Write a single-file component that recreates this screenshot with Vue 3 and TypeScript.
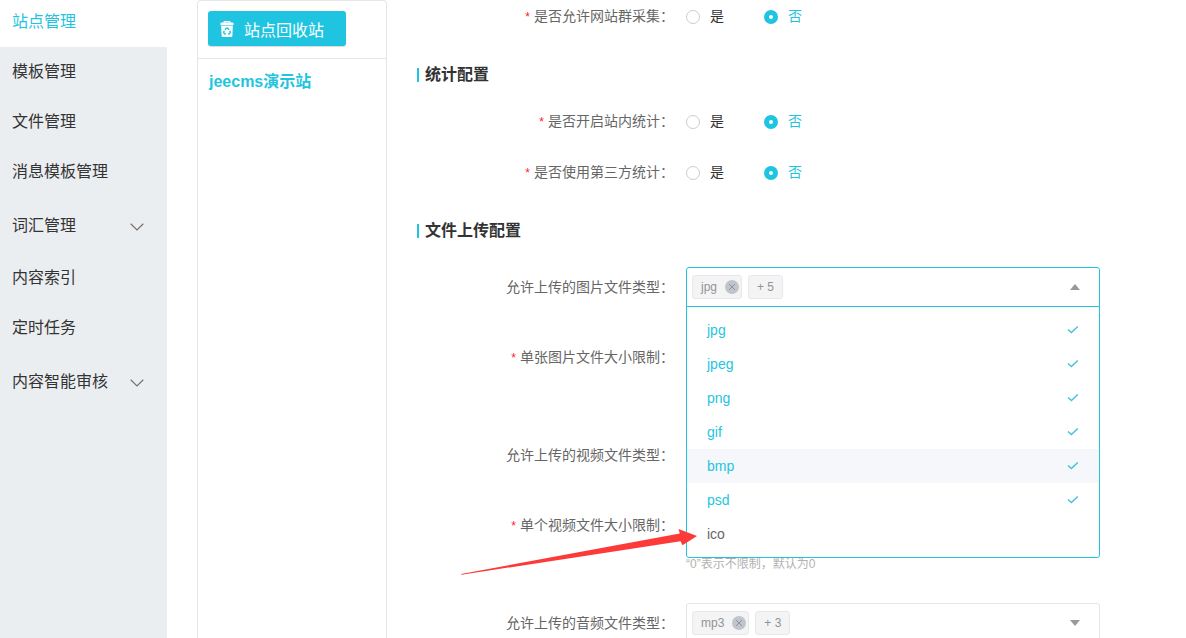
<script setup lang="ts">
import { ref } from 'vue'

interface MenuItem {
  label: string
  active?: boolean
  expandable?: boolean
}

interface RadioRow {
  id: string
  label: string
}

const menu: MenuItem[] = [
  { label: '站点管理', active: true },
  { label: '模板管理' },
  { label: '文件管理' },
  { label: '消息模板管理' },
  { label: '词汇管理', expandable: true },
  { label: '内容索引' },
  { label: '定时任务' },
  { label: '内容智能审核', expandable: true },
]

const collectRows: RadioRow[] = [{ id: 'collect', label: '是否允许网站群采集：' }]
const statRows: RadioRow[] = [
  { id: 'inner-stat', label: '是否开启站内统计：' },
  { id: 'third-stat', label: '是否使用第三方统计：' },
]

const answers = ref<Record<string, string>>({
  collect: 'no',
  'inner-stat': 'no',
  'third-stat': 'no',
})

const imageTypes = ['jpg', 'jpeg', 'png', 'gif', 'bmp', 'psd', 'ico']
const selected = ref<string[]>(['jpg', 'jpeg', 'png', 'gif', 'bmp', 'psd'])
const hovered = ref('bmp')
const open = ref(true)
const imageLimit = ref('')
const videoLimit = ref('')

function toggle(type: string) {
  selected.value = selected.value.includes(type)
    ? selected.value.filter((t) => t !== type)
    : [...selected.value, type]
}
</script>

<template>
  <div class="page">
    <nav class="sidebar">
      <template v-for="item in menu" :key="item.label">
        <button v-if="item.expandable" type="button" class="menu-item expandable">
          <span>{{ item.label }}</span>
          <svg class="chevron" viewBox="0 0 14 8" width="14" height="8" aria-hidden="true">
            <path d="M0.7 0.8L7 7L13.3 0.8" />
          </svg>
        </button>
        <a v-else href="#" class="menu-item" :class="{ active: item.active }">{{ item.label }}</a>
      </template>
    </nav>

    <aside class="sites">
      <div class="sites-head">
        <button type="button" class="recycle">
          <svg viewBox="0 0 14 16" width="14" height="16" aria-hidden="true">
            <path d="M4 2V1.4Q4 0.6 4.8 0.6H9.2Q10 0.6 10 1.4V2" fill="none" stroke="#fff" stroke-width="1.2" />
            <path d="M1.5 1.6H12.5Q13.5 1.6 13.5 2.6V4.2H0.5V2.6Q0.5 1.6 1.5 1.6Z" fill="#fff" />
            <path d="M1.2 4.8H12.8L12.4 14.8Q12.3 16 11.2 16H2.8Q1.7 16 1.6 14.8Z" fill="#fff" />
            <path
              d="M5 8.8L6.2 7.2H7.8L9 8.8M9.8 9.8L10.4 11.4L9.5 12.9H7.9M6.1 12.9H4.5L3.6 11.4L4.3 9.8"
              fill="none"
              stroke="#1fc5e0"
              stroke-width="1.4"
            />
          </svg>
          <span>站点回收站</span>
        </button>
      </div>
      <a href="#" class="site-name">jeecms演示站</a>
    </aside>

    <main class="content">
      <div v-for="row in collectRows" :key="row.id" class="row" role="radiogroup" :aria-labelledby="row.id">
        <span :id="row.id" class="label"><i class="star">*</i>{{ row.label }}</span>
        <div class="control radios">
          <label class="radio"><input v-model="answers[row.id]" type="radio" :name="row.id" value="yes" /><span>是</span></label>
          <label class="radio"><input v-model="answers[row.id]" type="radio" :name="row.id" value="no" /><span>否</span></label>
        </div>
      </div>

      <h2 class="heading">统计配置</h2>
      <div v-for="row in statRows" :key="row.id" class="row" role="radiogroup" :aria-labelledby="row.id">
        <span :id="row.id" class="label"><i class="star">*</i>{{ row.label }}</span>
        <div class="control radios">
          <label class="radio"><input v-model="answers[row.id]" type="radio" :name="row.id" value="yes" /><span>是</span></label>
          <label class="radio"><input v-model="answers[row.id]" type="radio" :name="row.id" value="no" /><span>否</span></label>
        </div>
      </div>

      <h2 class="heading">文件上传配置</h2>
      <div class="row">
        <label class="label tall" for="image-types">允许上传的图片文件类型：</label>
        <div class="control">
          <div class="select" :class="{ open }">
            <span v-if="selected.length" class="tag">
              {{ selected[0] }}
              <button type="button" class="close" aria-label="删除" @click="toggle(selected[0])">
                <svg viewBox="0 0 14 14" width="14" height="14"><path d="M4 4L10 10M10 4L4 10" /></svg>
              </button>
            </span>
            <span v-if="selected.length > 1" class="tag">+ {{ selected.length - 1 }}</span>
            <input id="image-types" class="select-input" type="text" readonly @click="open = !open" />
            <svg class="caret" viewBox="0 0 10 6" width="10" height="6" aria-hidden="true">
              <path :d="open ? 'M0 6L5 0L10 6Z' : 'M0 0L5 6L10 0Z'" />
            </svg>
          </div>
          <ul v-if="open" class="dropdown" role="listbox" aria-multiselectable="true">
            <li
              v-for="type in imageTypes"
              :key="type"
              class="option"
              :class="{ selected: selected.includes(type), hover: hovered === type }"
              role="option"
              :aria-selected="selected.includes(type)"
              @mouseenter="hovered = type"
              @click="toggle(type)"
            >
              <span>{{ type }}</span>
              <svg v-if="selected.includes(type)" viewBox="0 0 12 12" width="12" height="12" aria-hidden="true">
                <path d="M1 5.6L4.4 8.6L10.8 2.4" />
              </svg>
            </li>
          </ul>
          <svg class="pointer" viewBox="0 0 240 48" width="240" height="48" aria-hidden="true">
            <path d="M0 46L218.8 5.6L217.5 1L236 8L221.5 17.2L219.5 13.2L0.5 46.8Z" />
          </svg>
        </div>
      </div>

      <div class="row spaced">
        <label class="label tall" for="image-limit"><i class="star">*</i>单张图片文件大小限制：</label>
        <div class="control">
          <input id="image-limit" v-model="imageLimit" class="text-input" type="text" />
        </div>
      </div>

      <div class="row">
        <label class="label tall" for="video-types">允许上传的视频文件类型：</label>
        <div class="control">
          <div class="select">
            <input id="video-types" class="select-input" type="text" readonly />
            <svg class="caret" viewBox="0 0 10 6" width="10" height="6" aria-hidden="true"><path d="M0 0L5 6L10 0Z" /></svg>
          </div>
        </div>
      </div>

      <div class="row limit">
        <label class="label tall" for="video-limit"><i class="star">*</i>单个视频文件大小限制：</label>
        <div class="control">
          <input id="video-limit" v-model="videoLimit" class="text-input" type="text" />
          <p class="hint">“0”表示不限制，默认为0</p>
        </div>
      </div>

      <div class="row">
        <label class="label tall" for="audio-types">允许上传的音频文件类型：</label>
        <div class="control">
          <div class="select">
            <span class="tag">
              mp3
              <button type="button" class="close" aria-label="删除">
                <svg viewBox="0 0 14 14" width="14" height="14"><path d="M4 4L10 10M10 4L4 10" /></svg>
              </button>
            </span>
            <span class="tag">+ 3</span>
            <input id="audio-types" class="select-input" type="text" readonly />
            <svg class="caret" viewBox="0 0 10 6" width="10" height="6" aria-hidden="true"><path d="M0 0L5 6L10 0Z" /></svg>
          </div>
        </div>
      </div>
    </main>
  </div>
</template>

<style>
body {
  margin: 0;
  background: #fff;
}
</style>

<style scoped>
.page {
  display: flex;
  height: 100vh;
  overflow: hidden;
  color: #333;
  font-family: "Liberation Sans", "Noto Sans CJK SC", sans-serif;
  font-size: 14px;
}

.page *,
.page *::before {
  box-sizing: border-box;
}

button,
input {
  margin: 0;
  padding: 0;
  border: 0;
  font: inherit;
}

button {
  cursor: pointer;
}

.sidebar {
  flex: 0 0 167px;
  background: #ebeef1;
}

.menu-item {
  display: flex;
  align-items: center;
  justify-content: space-between;
  width: 100%;
  height: 50px;
  padding: 0 23px 0 12px;
  background: transparent;
  color: #333;
  font-size: 16px;
  line-height: 24px;
  text-decoration: none;
}

.menu-item.active {
  height: 47px;
  padding-bottom: 4px;
  background: #fff;
  color: #1fc5e0;
}

.menu-item.expandable {
  height: 56px;
  padding-top: 2px;
}

.chevron {
  margin-top: 2px;
  fill: none;
  stroke: #77706a;
  stroke-width: 1.2;
}

.sites {
  flex: 0 0 190px;
  margin-left: 30px;
  border: 1px solid #e6e6e6;
  border-bottom: 0;
  border-radius: 4px 4px 0 0;
}

.sites-head {
  padding: 10px 10px 12px;
  border-bottom: 1px solid #e6e6e6;
}

.recycle {
  display: flex;
  align-items: center;
  gap: 10px;
  width: 138px;
  height: 35px;
  padding: 1px 0 0 12px;
  border-radius: 3px;
  background: #1fc5e0;
  box-shadow: 0 1px 1px rgba(0, 0, 0, 0.15);
  color: #fff;
  font-size: 16px;
}

.site-name {
  display: block;
  padding: 11px;
  color: #1fc5e0;
  font-size: 16px;
  font-weight: bold;
  line-height: 24px;
  text-decoration: none;
}

.content {
  flex: 1;
  min-width: 0;
  padding: 6px 86px 0 30px;
}

.row {
  display: flex;
  margin-bottom: 30px;
}

.row.spaced {
  margin-bottom: 58px;
}

.row.limit {
  margin-bottom: 29px;
}

.label {
  flex: 0 0 269px;
  padding-right: 12px;
  color: #666;
  line-height: 21px;
  text-align: right;
}

.label.tall {
  line-height: 40px;
}

.star {
  margin-right: 4px;
  color: #f22;
  font-size: 12px;
  font-style: normal;
  line-height: 1;
}

.control {
  position: relative;
  flex: 1;
  min-width: 0;
}

.radios {
  display: flex;
  gap: 40px;
}

.radio {
  display: flex;
  align-items: center;
  gap: 10px;
  line-height: 21px;
}

.radio input {
  width: 14px;
  height: 14px;
  border: 1px solid #ccc;
  border-radius: 50%;
  appearance: none;
  background: #fff;
}

.radio input:checked {
  border: 5px solid #1fc5e0;
}

.radio input:checked + span {
  color: #1fc5e0;
}

.heading {
  display: flex;
  align-items: center;
  gap: 6px;
  margin: 0 0 19px;
  padding-top: 1px;
  color: #333;
  font-size: 16px;
  font-weight: bold;
  line-height: 34px;
}

.heading::before {
  width: 2px;
  height: 14px;
  background: #1fc5e0;
  content: "";
}

.select {
  display: flex;
  align-items: center;
  gap: 6px;
  height: 40px;
  padding: 0 19px 0 5px;
  border: 1px solid #e6e6e6;
  border-radius: 3px;
}

.select.open {
  border-color: #1fc5e0;
  border-radius: 3px 3px 0 0;
}

.tag {
  display: flex;
  align-items: center;
  gap: 8px;
  height: 24px;
  padding: 0 8px;
  border: 1px solid #e8e8ea;
  border-radius: 3px;
  background: #f4f4f5;
  color: #909399;
  font-size: 12px;
  white-space: nowrap;
}

.tag:has(.close) {
  padding-right: 2px;
}

.close {
  width: 14px;
  height: 14px;
  border-radius: 50%;
  background: #c0c4cc;
}

.close svg {
  display: block;
  fill: none;
  stroke: #909399;
  stroke-width: 1;
}

.select-input {
  flex: 1;
  min-width: 0;
  height: 36px;
  background: transparent;
  outline: 0;
}

.caret {
  fill: #999;
}

.dropdown {
  position: absolute;
  z-index: 2;
  top: 39px;
  right: 0;
  left: 0;
  margin: 0;
  padding: 6px 0;
  border: 1px solid #1fc5e0;
  border-radius: 0 0 3px 3px;
  background: #fff;
  list-style: none;
}

.option {
  display: flex;
  align-items: center;
  justify-content: space-between;
  height: 34px;
  padding: 0 20px;
  color: #666;
  cursor: pointer;
}

.option.selected {
  color: #1fc5e0;
}

.option.hover {
  background: #f5f7fa;
}

.option svg {
  fill: none;
  stroke: #3fc3dd;
  stroke-width: 1.4;
}

.pointer {
  position: absolute;
  z-index: 3;
  top: 261px;
  left: -225px;
  fill: #fc3a38;
  pointer-events: none;
}

.text-input {
  display: block;
  width: 100%;
  height: 40px;
  padding: 0 12px;
  border: 1px solid #e6e6e6;
  border-radius: 3px;
}

.hint {
  margin: 9px 0 0;
  color: #b2b2b2;
  font-size: 12px;
  line-height: 20px;
}
</style>
